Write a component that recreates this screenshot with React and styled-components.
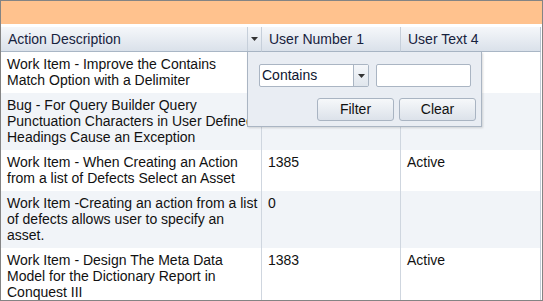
import React from "react"
import styled, { createGlobalStyle } from "styled-components"

const GlobalStyle = createGlobalStyle`
body {
    margin: 0;
    font-family: "Liberation Sans", Arial, sans-serif;
}
`

// description lines are kept as the grid wrapped them
const rows = [
    { desc: ["Work Item - Improve the Contains", "Match Option with a Delimiter"], num: "", text: "" },
    { desc: ["Bug - For Query Builder Query", "Punctuation Characters in User Defined", "Headings Cause an Exception"], num: "", text: "" },
    { desc: ["Work Item - When Creating an Action", "from a list of Defects Select an Asset"], num: "1385", text: "Active" },
    { desc: ["Work Item -Creating an action from a list", "of defects allows user to specify an", "asset."], num: "0", text: "" },
    { desc: ["Work Item - Design The Meta Data", "Model for the Dictionary Report in", "Conquest III"], num: "1383", text: "Active" },
]

const Caret = () => (
    <svg width="7" height="4" viewBox="0 0 7 4">
        <path d="M0 0 L7 0 L3.5 4 Z" fill="#333" />
    </svg>
)

const App = () => {
    return (
        <Frame>
            <GlobalStyle />
            <TitleBar />
            <Grid>
                <HeadCell>
                    <HeadLabel>Action Description</HeadLabel>
                    <Trigger><Caret /></Trigger>
                </HeadCell>
                <HeadCell><HeadLabel>User Number 1</HeadLabel></HeadCell>
                <HeadCell last><HeadLabel>User Text 4</HeadLabel></HeadCell>
                {rows.map((r, i) => (
                    <React.Fragment key={i}>
                        <Cell alt={i % 2 === 1}>
                            {r.desc.map((line, j) => <Line key={j}>{line}</Line>)}
                        </Cell>
                        <Cell alt={i % 2 === 1}>{r.num}</Cell>
                        <Cell alt={i % 2 === 1} last>{r.text}</Cell>
                    </React.Fragment>
                ))}
            </Grid>
            <FilterMenu>
                <FilterRow>
                    <Select>
                        <SelectValue>Contains</SelectValue>
                        <SelectArrow><Caret /></SelectArrow>
                    </Select>
                    <TextBox />
                </FilterRow>
                <ButtonRow>
                    <Button>Filter</Button>
                    <Button>Clear</Button>
                </ButtonRow>
            </FilterMenu>
        </Frame>
    )
}

const Frame = styled.div`
position: relative;
width: 543px;
height: 301px;
box-sizing: border-box;
border: 1px solid #848484;
overflow: hidden;
background: #fff;
`

const TitleBar = styled.div`
height: 23px;
background: #ffc28e;
margin-bottom: 3px;
`

const Grid = styled.div`
display: grid;
grid-template-columns: 261px 139px 140px;
width: 540px;
`

const HeadCell = styled.div`
display: flex;
align-items: stretch;
height: 25px;
box-sizing: border-box;
background: linear-gradient(#f5f7fa, #dae1ea);
border-bottom: 1px solid #a9b6c5;
border-right: 1px solid ${p => p.last ? "#b9c4d1" : "#c6cfda"};
`

const HeadLabel = styled.span`
flex: 1;
padding: 0 6px 0 7px;
line-height: 24px;
font-size: 14px;
color: #17223d;
white-space: nowrap;
`

const Trigger = styled.span`
width: 13px;
display: flex;
align-items: center;
justify-content: center;
border-left: 1px solid #c6cfda;
`

const Cell = styled.div`
padding: 4px 0 5px 6px;
font-size: 14px;
line-height: 16px;
color: #111;
overflow: hidden;
background: ${p => p.alt ? "#f1f4f8" : "#fff"};
border-right: 1px solid ${p => p.last ? "#c3ccd7" : "#cfd6df"};
`

const Line = styled.div`
white-space: nowrap;
`

const FilterMenu = styled.div`
position: absolute;
left: 246px;
top: 51px;
width: 235px;
height: 75px;
box-sizing: border-box;
padding: 12px 5px 0 11px;
background: #e9edf3;
border: 1px solid #aab5c3;
border-top: none;
box-shadow: 1px 1px 2px rgba(0, 0, 0, 0.15);
`

const FilterRow = styled.div`
display: flex;
gap: 7px;
`

const Select = styled.div`
display: flex;
width: 110px;
height: 23px;
box-sizing: border-box;
background: #fff;
border: 1px solid #aab5c3;
border-radius: 2px;
`

const SelectValue = styled.span`
flex: 1;
padding-left: 2px;
font-size: 14px;
line-height: 21px;
color: #0d1530;
`

const SelectArrow = styled.span`
width: 14px;
display: flex;
align-items: center;
justify-content: center;
border-left: 1px solid #aab5c3;
background: linear-gradient(#f5f7fa, #e0e6ed);
`

const TextBox = styled.div`
width: 95px;
height: 23px;
box-sizing: border-box;
background: #fff;
border: 1px solid #aab5c3;
border-radius: 2px;
`

const ButtonRow = styled.div`
display: flex;
justify-content: flex-end;
gap: 5px;
margin-top: 11px;
`

const Button = styled.div`
width: 77px;
height: 23px;
box-sizing: border-box;
border: 1px solid #a9b4c2;
border-radius: 3px;
background: linear-gradient(#f6f8fa, #dce2ea);
font-size: 14px;
line-height: 21px;
text-align: center;
color: #111;
`

export default App
